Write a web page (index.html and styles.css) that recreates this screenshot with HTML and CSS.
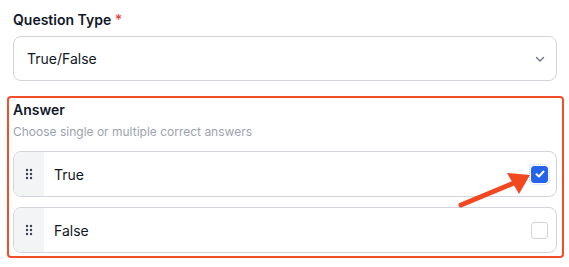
FILE: index.html
```html
<!DOCTYPE html>
<html lang="en">
<head>
    <meta charset="UTF-8">
    <meta name="viewport" content="width=device-width, initial-scale=1.0">
    <link rel="stylesheet" href="styles.css">
</head>
<body>
    <div class="page">
        <div class="field">
            <label class="label">Question Type <span class="req">*</span></label>
            <div class="select">
                <span>True/False</span>
                <svg class="chev" width="12" height="12" viewBox="0 0 12 12"><path d="M2.5 4.5 6 8l3.5-3.5" fill="none" stroke="#6b7280" stroke-width="1.4" stroke-linecap="round" stroke-linejoin="round"/></svg>
            </div>
        </div>
        <div class="answer">
            <div class="answer-title">Answer</div>
            <div class="answer-hint">Choose single or multiple correct answers</div>
            <div class="options">
                <div class="option">
                    <div class="handle">
                        <svg width="8" height="12" viewBox="0 0 8 12"><g fill="#374151"><circle cx="2" cy="2" r="1.2"/><circle cx="6" cy="2" r="1.2"/><circle cx="2" cy="6" r="1.2"/><circle cx="6" cy="6" r="1.2"/><circle cx="2" cy="10" r="1.2"/><circle cx="6" cy="10" r="1.2"/></g></svg>
                    </div>
                    <div class="option-text">True</div>
                    <span class="check checked">
                        <svg width="12" height="12" viewBox="0 0 12 12"><path d="M2.5 6.2 5 8.5l4.5-5" fill="none" stroke="#fff" stroke-width="2" stroke-linecap="round" stroke-linejoin="round"/></svg>
                    </span>
                </div>
                <div class="option">
                    <div class="handle">
                        <svg width="8" height="12" viewBox="0 0 8 12"><g fill="#374151"><circle cx="2" cy="2" r="1.2"/><circle cx="6" cy="2" r="1.2"/><circle cx="2" cy="6" r="1.2"/><circle cx="6" cy="6" r="1.2"/><circle cx="2" cy="10" r="1.2"/><circle cx="6" cy="10" r="1.2"/></g></svg>
                    </div>
                    <div class="option-text">False</div>
                    <span class="check"></span>
                </div>
            </div>
        </div>
        <svg class="arrow" width="569" height="267" viewBox="0 0 569 267">
            <line x1="461" y1="205" x2="514" y2="183" stroke="#f24822" stroke-width="5" stroke-linecap="round"/>
            <polygon points="530,175 507,173 519,194" fill="#f24822"/>
        </svg>
    </div>
</body>
</html>
```

FILE: styles.css
```css
body {
    margin: 0;
    font-family: Inter, "Noto Sans", sans-serif;
    background: #ffffff;
    color: #111827;
}
.page {
    position: relative;
    width: 569px;
    height: 267px;
    padding: 10px 5px 0 7px;
    box-sizing: border-box;
}
.field {
    padding: 0 7px 0 6px;
}
.label {
    display: block;
    font-size: 14px;
    font-weight: 600;
    line-height: 20px;
    margin-bottom: 6px;
}
.req {
    color: #ef4444;
}
.select {
    display: flex;
    align-items: center;
    justify-content: space-between;
    height: 45px;
    box-sizing: border-box;
    border: 1px solid #d1d5db;
    border-radius: 8px;
    padding: 0 10px 0 13px;
    font-size: 14px;
}
.answer {
    margin-top: 15px;
    border: 2px solid #f24e2a;
    border-radius: 4px;
    padding: 2px 5px 3px 4px;
}
.answer-title {
    font-size: 14px;
    font-weight: 600;
    line-height: 20px;
}
.answer-hint {
    font-size: 12px;
    color: #9ca3af;
    line-height: 16px;
    margin-top: 4px;
}
.options {
    display: flex;
    flex-direction: column;
    gap: 10px;
    margin-top: 11px;
}
.option {
    display: flex;
    align-items: center;
    height: 46px;
    box-sizing: border-box;
    border: 1px solid #d1d5db;
    border-radius: 8px;
    overflow: hidden;
}
.handle {
    width: 30px;
    align-self: stretch;
    background: #f3f4f6;
    display: flex;
    align-items: center;
    justify-content: center;
}
.option-text {
    flex: 1;
    padding-left: 10px;
    font-size: 14px;
}
.check {
    width: 17px;
    height: 17px;
    box-sizing: border-box;
    border: 1px solid #d1d5db;
    border-radius: 3px;
    margin-right: 8px;
    display: flex;
    align-items: center;
    justify-content: center;
}
.check.checked {
    background: #2563eb;
    border-color: #2563eb;
    outline: 1px dotted #c7d2fe;
    outline-offset: 1px;
}
.arrow {
    position: absolute;
    left: 0;
    top: 0;
    pointer-events: none;
}
```
